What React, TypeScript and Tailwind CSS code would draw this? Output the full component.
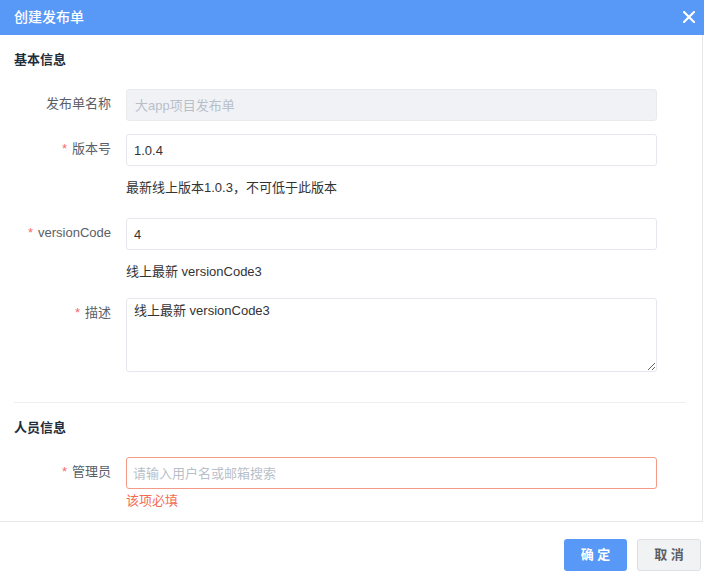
import React from "react";

const FONT = { fontFamily: '"Liberation Sans", "Noto Sans CJK SC", sans-serif' };

function Label({ text, required }: { text: string; required?: boolean }) {
  return (
    <div className="w-[98px] shrink-0 text-right text-[13px] leading-[30px] text-[#5a5e66] pr-[1px] whitespace-nowrap">
      {required && <span className="text-[#f56c6c] mr-[5px] text-[13px]">*</span>}
      {text}
    </div>
  );
}

export default function App() {
  return (
    <div className="w-[704px] h-[585px] bg-white overflow-hidden" style={FONT}>
      <div className="h-[35px] bg-[#5899f7] flex items-center justify-between pl-[14px] pr-[9px]">
        <span className="text-white text-[14px] font-medium">创建发布单</span>
        <svg width="12" height="12" viewBox="0 0 12 12" className="mb-[1px]">
          <path d="M1 1 L11 11 M11 1 L1 11" stroke="white" strokeWidth="2.2" strokeLinecap="round" />
        </svg>
      </div>

      <div className="w-[703px] h-[487px] border-r border-b border-[#e4e6ea] pl-[14px] pr-[16px]">
        <div className="pt-[16px] text-[13px] leading-[18px] font-bold text-[#1f2d3d]">基本信息</div>

        <div className="flex mt-[20px] gap-[14px]">
          <Label text="发布单名称" />
          <input
            disabled
            placeholder="大app项目发布单"
            className="w-[531px] h-[32px] rounded-[3px] border border-[#e8eaee] bg-[#f0f2f5] px-[8px] text-[13px] placeholder:text-[#b9bfc9] outline-none"
          />
        </div>

        <div className="flex mt-[13px] gap-[14px]">
          <Label text="版本号" required />
          <input
            defaultValue="1.0.4"
            className="w-[531px] h-[32px] rounded-[3px] border border-[#e4e7ed] bg-white px-[7px] text-[13px] text-[#333] outline-none"
          />
        </div>
        <div className="ml-[112px] mt-[12px] text-[13px] leading-[20px] text-[#333]">
          最新线上版本1.0.3，不可低于此版本
        </div>

        <div className="flex mt-[20px] gap-[14px]">
          <Label text="versionCode" required />
          <input
            defaultValue="4"
            className="w-[531px] h-[32px] rounded-[3px] border border-[#e4e7ed] bg-white px-[7px] text-[13px] text-[#333] outline-none"
          />
        </div>
        <div className="ml-[112px] mt-[12px] text-[13px] leading-[20px] text-[#333]">
          线上最新 versionCode3
        </div>

        <div className="flex mt-[16px] gap-[14px]">
          <Label text="描述" required />
          <textarea
            defaultValue="线上最新 versionCode3"
            className="w-[531px] h-[74px] rounded-[3px] border border-[#e4e7ed] bg-white px-[7px] py-[3px] text-[13px] leading-[18px] text-[#333] outline-none"
          />
        </div>

        <div className="mt-[30px] border-t border-[#eceef1]" />

        <div className="mt-[16px] text-[13px] leading-[18px] font-bold text-[#1f2d3d]">人员信息</div>

        <div className="flex mt-[20px] gap-[14px]">
          <Label text="管理员" required />
          <input
            placeholder="请输入用户名或邮箱搜索"
            className="w-[531px] h-[32px] rounded-[3px] border border-[#f59a88] bg-white px-[6px] text-[13px] placeholder:text-[#b9bfc9] outline-none"
          />
        </div>
        <div className="ml-[112px] mt-[2px] text-[13px] leading-[20px] text-[#f36b55]">该项必填</div>
      </div>

      <div className="flex justify-end gap-[10px] pt-[17px] pr-[3px]">
        <button className="w-[63px] h-[32px] rounded-[3px] bg-[#5899f7] text-white text-[13px] font-bold">
          确 定
        </button>
        <button className="w-[64px] h-[32px] rounded-[3px] bg-[#f1f2f4] border border-[#dcdfe4] text-[#5a5e66] text-[13px] font-bold">
          取 消
        </button>
      </div>
    </div>
  );
}
